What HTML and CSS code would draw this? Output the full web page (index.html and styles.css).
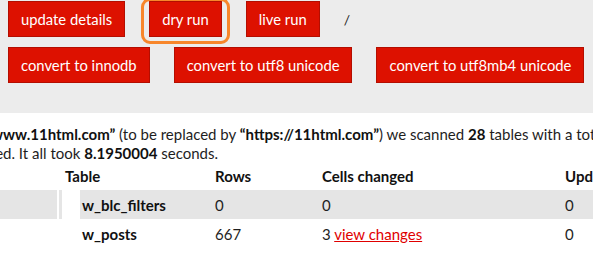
FILE: index.html
```html
<!DOCTYPE html>
<html>

<head>
  <meta charset="utf-8">
  <meta name="viewport" content="width=device-width, initial-scale=1">
  <title>Search and Replace DB</title>
  <link rel="stylesheet" href="styles.css">
</head>

<body>
  <div class="actions">
    <div class="row">
      <button class="btn">update details</button>
      <button class="btn active">dry run</button>
      <button class="btn">live run</button>
      <span class="sep">/</span>
    </div>
    <div class="row">
      <button class="btn">convert to innodb</button>
      <button class="btn">convert to utf8 unicode</button>
      <button class="btn">convert to utf8mb4 unicode</button>
    </div>
  </div>

  <div class="report">
    <p class="summary">
      <span class="line line-a">In <b>“http://www.11html.com”</b> (to be replaced by <b>“https://11html.com”</b>) we scanned <b>28</b> tables with a total of <b>1384</b> rows.</span>
      <span class="line line-b"><b>3</b> cells were changed. It all took <b>8.1950004</b> seconds.</span>
    </p>

    <table class="results">
      <colgroup>
        <col class="c-lead">
        <col class="c-gap">
        <col class="c-tick">
        <col class="c-indent">
        <col class="c-name">
        <col class="c-rows">
        <col class="c-cells">
        <col class="c-upd">
      </colgroup>
      <tr>
        <th></th>
        <th></th>
        <th></th>
        <th colspan="2">Table</th>
        <th>Rows</th>
        <th>Cells changed</th>
        <th>Updates</th>
      </tr>
      <tr class="odd">
        <td></td>
        <td class="gap"></td>
        <td></td>
        <td class="indent"></td>
        <td class="name">w_blc_filters</td>
        <td>0</td>
        <td>0</td>
        <td>0</td>
      </tr>
      <tr>
        <td></td>
        <td class="gap"></td>
        <td></td>
        <td class="indent"></td>
        <td class="name">w_posts</td>
        <td>667</td>
        <td>3 <a href="#">view changes</a></td>
        <td>0</td>
      </tr>
    </table>
  </div>
</body>

</html>
```

FILE: styles.css
```css
body {
  margin: 0;
  overflow: hidden;
  font-family: Lato, "Open Sans", sans-serif;
  font-size: 15px;
  color: #1e1e1e;
  background: #fff;
}

.actions {
  background: #ececec;
  padding: 1px 8px 30px;
}

.row {
  display: flex;
  align-items: center;
  gap: 24px;
  margin-bottom: 10px;
}

.row:last-child {
  margin-bottom: 0;
}

.btn {
  flex-shrink: 0;
  white-space: nowrap;
  font-family: inherit;
  font-size: 14.8px;
  color: #fff;
  background: #dd1100;
  border: 1px solid #b40e00;
  padding: 0 12px;
  height: 36px;
  cursor: pointer;
  position: relative;
}

.btn.active::after {
  content: "";
  position: absolute;
  left: -9px;
  right: -9px;
  top: -4px;
  bottom: -8px;
  border: 3px solid #f7862b;
  border-radius: 9px;
}

.sep {
  margin-left: 0;
  font-size: 14px;
}

.summary {
  margin: 12px 0 4px;
  line-height: 19px;
}

.line {
  display: block;
  white-space: nowrap;
}

.line-a {
  text-indent: -73px;
}

.line-b {
  text-indent: -125px;
}

.summary b {
  color: #111;
}

.results {
  table-layout: fixed;
  border-collapse: collapse;
  margin-left: -60px;
  width: 780px;
}

.c-lead { width: 117px; }
.c-gap { width: 2px; }
.c-tick { width: 3px; }
.c-indent { width: 18px; }
.c-name { width: 132px; }
.c-rows { width: 107px; }
.c-cells { width: 243px; }
.c-upd { width: 158px; }

.results th {
  text-align: left;
  font-weight: bold;
  color: #111;
  padding: 0 3px 5px;
  height: 17px;
  white-space: nowrap;
}

.results td {
  height: 29px;
  padding: 0 3px;
  white-space: nowrap;
}

.results td.name {
  font-weight: bold;
  color: #111;
  padding-left: 2px;
}

.odd td {
  background: #e5e5e5;
}

.odd td.gap,
.odd td.indent {
  background: #fff;
}

.results a {
  color: #e00000;
}
```
